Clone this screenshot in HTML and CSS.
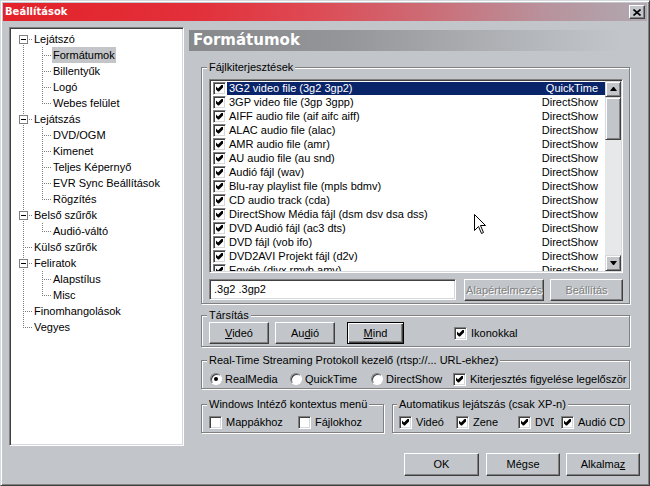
FILE: index.html
```html
<!DOCTYPE html>
<html lang="hu">
<head>
<meta charset="utf-8">
<title>Beállítások</title>
<link rel="stylesheet" href="styles.css">
</head>
<body>
<div class="window">
  <div class="titlebar">
    <span class="title">Beállítások</span>
    <span class="close"><svg width="8" height="7" viewBox="0 0 8 7"><path d="M0.5 0.5 L7.5 6.5 M7.5 0.5 L0.5 6.5" stroke="#000" stroke-width="1.6" fill="none"/></svg></span>
  </div>
  <div class="content">
    <div class="main">
      <div class="tree">
        <div class="row"><span class="g first"><span class="exp"></span></span><span class="lbl">Lejátszó</span></div>
        <div class="row"><span class="g pipe"></span><span class="g tee"></span><span class="lbl sel">Formátumok</span></div>
        <div class="row"><span class="g pipe"></span><span class="g tee"></span><span class="lbl">Billentyűk</span></div>
        <div class="row"><span class="g pipe"></span><span class="g tee"></span><span class="lbl">Logó</span></div>
        <div class="row"><span class="g pipe"></span><span class="g ell"></span><span class="lbl">Webes felület</span></div>
        <div class="row"><span class="g tee"><span class="exp"></span></span><span class="lbl">Lejátszás</span></div>
        <div class="row"><span class="g pipe"></span><span class="g tee"></span><span class="lbl">DVD/OGM</span></div>
        <div class="row"><span class="g pipe"></span><span class="g tee"></span><span class="lbl">Kimenet</span></div>
        <div class="row"><span class="g pipe"></span><span class="g tee"></span><span class="lbl">Teljes Képernyő</span></div>
        <div class="row"><span class="g pipe"></span><span class="g tee"></span><span class="lbl">EVR Sync Beállítások</span></div>
        <div class="row"><span class="g pipe"></span><span class="g ell"></span><span class="lbl">Rögzítés</span></div>
        <div class="row"><span class="g tee"><span class="exp"></span></span><span class="lbl">Belső szűrők</span></div>
        <div class="row"><span class="g pipe"></span><span class="g ell"></span><span class="lbl">Audió-váltó</span></div>
        <div class="row"><span class="g tee"></span><span class="lbl">Külső szűrők</span></div>
        <div class="row"><span class="g tee"><span class="exp"></span></span><span class="lbl">Feliratok</span></div>
        <div class="row"><span class="g pipe"></span><span class="g tee"></span><span class="lbl">Alapstílus</span></div>
        <div class="row"><span class="g pipe"></span><span class="g ell"></span><span class="lbl">Misc</span></div>
        <div class="row"><span class="g tee"></span><span class="lbl">Finomhangolások</span></div>
        <div class="row"><span class="g ell"></span><span class="lbl">Vegyes</span></div>
      </div>

      <div class="pane">
        <div class="header">Formátumok</div>

        <fieldset class="grp g-ext">
          <legend>Fájlkiterjesztések</legend>
          <div class="list">
            <div class="rows">
              <div class="item sel"><span class="cb on"></span><span class="txt"><span>3G2 video file (3g2 3gp2)</span><span>QuickTime</span></span></div>
              <div class="item"><span class="cb on"></span><span class="txt"><span>3GP video file (3gp 3gpp)</span><span>DirectShow</span></span></div>
              <div class="item"><span class="cb on"></span><span class="txt"><span>AIFF audio file (aif aifc aiff)</span><span>DirectShow</span></span></div>
              <div class="item"><span class="cb on"></span><span class="txt"><span>ALAC audio file (alac)</span><span>DirectShow</span></span></div>
              <div class="item"><span class="cb on"></span><span class="txt"><span>AMR audio file (amr)</span><span>DirectShow</span></span></div>
              <div class="item"><span class="cb on"></span><span class="txt"><span>AU audio file (au snd)</span><span>DirectShow</span></span></div>
              <div class="item"><span class="cb on"></span><span class="txt"><span>Audió fájl (wav)</span><span>DirectShow</span></span></div>
              <div class="item"><span class="cb on"></span><span class="txt"><span>Blu-ray playlist file (mpls bdmv)</span><span>DirectShow</span></span></div>
              <div class="item"><span class="cb on"></span><span class="txt"><span>CD audio track (cda)</span><span>DirectShow</span></span></div>
              <div class="item"><span class="cb on"></span><span class="txt"><span>DirectShow Média fájl (dsm dsv dsa dss)</span><span>DirectShow</span></span></div>
              <div class="item"><span class="cb on"></span><span class="txt"><span>DVD Audió fájl (ac3 dts)</span><span>DirectShow</span></span></div>
              <div class="item"><span class="cb on"></span><span class="txt"><span>DVD fájl (vob ifo)</span><span>DirectShow</span></span></div>
              <div class="item"><span class="cb on"></span><span class="txt"><span>DVD2AVI Projekt fájl (d2v)</span><span>DirectShow</span></span></div>
              <div class="item"><span class="cb on"></span><span class="txt"><span>Egyéb (divx rmvb amv)</span><span>DirectShow</span></span></div>
            </div>
            <div class="vscroll">
              <span class="sbtn"><span class="arr up"></span></span>
              <span class="thumb"></span>
              <span class="track"></span>
              <span class="sbtn"><span class="arr down"></span></span>
            </div>
          </div>
          <div class="extrow">
            <div class="input">.3g2 .3gp2</div>
            <div class="btn dis w-def">Alapértelmezés</div>
            <div class="btn dis w-set">Beállítás</div>
          </div>
        </fieldset>

        <fieldset class="grp g-assoc">
          <legend>Társítás</legend>
          <div class="assocrow">
            <div class="btn w-vid"><span><u>V</u>ideó</span></div>
            <div class="btn w-aud"><span>Au<u>d</u>ió</span></div>
            <div class="btn def w-mind"><span><u>M</u>ind</span></div>
            <label class="opt o-icons"><span class="cb on"></span><span class="otxt">Ikonokkal</span></label>
          </div>
        </fieldset>

        <fieldset class="grp g-rtsp">
          <legend>Real-Time Streaming Protokoll kezelő (rtsp://... URL-ekhez)</legend>
          <div class="optrow rtsprow">
            <label class="opt o-rm"><span class="rb on"></span><span class="rtxt">RealMedia</span></label>
            <label class="opt o-qt"><span class="rb"></span><span class="rtxt">QuickTime</span></label>
            <label class="opt o-ds"><span class="rb"></span><span class="rtxt">DirectShow</span></label>
            <label class="opt"><span class="cb on"></span><span class="otxt">Kiterjesztés figyelése legelőször</span></label>
          </div>
        </fieldset>

        <div class="grprow">
          <fieldset class="grp g-win">
            <legend>Windows Intéző kontextus menü</legend>
            <div class="optrow">
              <label class="opt o-map"><span class="cb"></span><span class="otxt">Mappákhoz</span></label>
              <label class="opt"><span class="cb"></span><span class="otxt">Fájlokhoz</span></label>
            </div>
          </fieldset>
          <fieldset class="grp g-auto">
            <legend>Automatikus lejátszás (csak XP-n)</legend>
            <div class="optrow">
              <label class="opt o-vid"><span class="cb on"></span><span class="otxt">Videó</span></label>
              <label class="opt o-zene"><span class="cb on"></span><span class="otxt">Zene</span></label>
              <label class="opt o-dvd"><span class="cb on"></span><span class="otxt">DVD</span></label>
              <label class="opt"><span class="cb on"></span><span class="otxt">Audió CD</span></label>
            </div>
          </fieldset>
        </div>
      </div>
    </div>

    <div class="footer">
      <div class="btn w-ok">OK</div>
      <div class="btn w-cancel">Mégse</div>
      <div class="btn w-apply"><span>Alkalma<u>z</u></span></div>
    </div>
  </div>

  <svg class="cursor" width="13" height="21" viewBox="0 0 13 21"><path d="M0.5 0.5 L0.5 16.5 L4.5 12.5 L7.5 19.5 L9.5 18.5 L6.5 11.5 L11.5 11.5 Z" fill="#fff" stroke="#000" stroke-width="1"/></svg>
</div>
</body>
</html>
```

FILE: styles.css
```css
* { box-sizing: border-box; }
html, body { margin: 0; padding: 0; }
body {
  width: 650px;
  height: 486px;
  overflow: hidden;
  font-family: "Liberation Sans", Arial, sans-serif;
  font-size: 11px;
  line-height: 13px;
  color: #000;
  background: #c2c6ca;
}

.window {
  position: relative;
  width: 650px;
  height: 486px;
  background: #c2c6ca;
  border: 1px solid;
  border-color: #d6d9dc #404040 #404040 #d6d9dc;
  box-shadow: inset 1px 1px 0 #fff, inset -1px -1px 0 #808080;
  padding: 2px;
  display: flex;
  flex-direction: column;
}

/* title bar */
.titlebar {
  height: 18px;
  flex: none;
  display: flex;
  align-items: center;
  padding-left: 2px;
  padding-right: 2px;
  background: linear-gradient(to right, #e4222a 0%, #e2303a 30%, #de4a54 48%, #cc6c76 66%, #b8929c 84%, #b0a8b0 100%);
}
.title {
  flex: 1;
  color: #fff;
  font-family: "DejaVu Sans", Verdana, sans-serif;
  font-weight: bold;
  font-size: 10px;
  line-height: 18px;
}
.close {
  width: 16px;
  height: 14px;
  display: flex;
  align-items: center;
  justify-content: center;
  background: #c2c6ca;
  border: 1px solid;
  border-color: #fff #404040 #404040 #fff;
  box-shadow: inset -1px -1px 0 #808080;
}

.content {
  flex: 1;
  padding: 6px 7px 0 6px;
  display: flex;
  flex-direction: column;
}
.main {
  display: flex;
  gap: 5px;
}

/* sunken field */
.tree, .list, .input {
  background: #fff;
  border: 1px solid;
  border-color: #808080 #fff #fff #808080;
  box-shadow: inset 1px 1px 0 #404040, inset -1px -1px 0 #d6d9dc;
}

/* tree */
.tree {
  width: 175px;
  height: 419px;
  flex: none;
  padding: 3px 0 0 4px;
}
.row {
  display: flex;
  height: 16px;
  line-height: 16px;
  white-space: nowrap;
}
.g {
  flex: none;
  width: 19px;
  height: 16px;
  display: flex;
  align-items: flex-start;
}
.pipe {
  background: repeating-linear-gradient(to bottom, #808080 0 1px, transparent 1px 2px) 9px 0 / 1px 16px no-repeat;
}
.tee {
  background:
    repeating-linear-gradient(to bottom, #808080 0 1px, transparent 1px 2px) 9px 0 / 1px 16px no-repeat,
    repeating-linear-gradient(to right, #808080 0 1px, transparent 1px 2px) 11px 8px / 8px 1px no-repeat;
}
.ell {
  background:
    repeating-linear-gradient(to bottom, #808080 0 1px, transparent 1px 2px) 9px 0 / 1px 9px no-repeat,
    repeating-linear-gradient(to right, #808080 0 1px, transparent 1px 2px) 11px 8px / 8px 1px no-repeat;
}
.first {
  background:
    repeating-linear-gradient(to bottom, #808080 0 1px, transparent 1px 2px) 9px 8px / 1px 8px no-repeat,
    repeating-linear-gradient(to right, #808080 0 1px, transparent 1px 2px) 11px 8px / 8px 1px no-repeat;
}
.exp {
  width: 9px;
  height: 9px;
  margin: 4px 0 0 5px;
  background: #fff;
  border: 1px solid #808080;
  display: flex;
  align-items: center;
  justify-content: center;
}
.exp::after {
  content: "";
  width: 5px;
  height: 1px;
  background: #000;
}
.lbl {
  padding: 0 1px;
  height: 16px;
}
.lbl.sel { background: #c3c5c8; }

/* right pane */
.pane {
  width: 451px;
  flex: none;
  display: flex;
  flex-direction: column;
}
.header {
  margin-top: 3px;
  height: 21px;
  background: linear-gradient(to right, #86888a 0%, #94969a 35%, #acaeb2 65%, #c2c6ca 96%);
  color: #fff;
  font-family: "DejaVu Sans", Verdana, sans-serif;
  font-weight: bold;
  font-size: 15px;
  line-height: 21px;
  padding-left: 4px;
}

/* group boxes */
.grp {
  margin: 0 10px 0 12px;
  padding: 0 6px 2px 7px;
  min-width: 0;
  border: 1px solid #808080;
  box-shadow: 1px 1px 0 #fff, inset 1px 1px 0 #fff;
}
.grp legend {
  padding: 0 2px;
  margin-left: -2px;
  line-height: 13px;
  background: #c2c6ca;
}
.g-ext { margin-top: 10px; }
.g-assoc { margin-top: 5px; padding-bottom: 2px; }
.g-rtsp { margin-top: 7px; padding-bottom: 1px; }
.grprow {
  margin: 9px 10px 0 12px;
  display: flex;
  gap: 8px;
}
.grprow .grp { margin: 0; }
.g-win { width: 183px; flex: none; }
.g-auto { flex: 1; padding-left: 6px; }

/* list */
.list {
  margin-top: 5px;
  height: 194px;
  padding: 1px;
  display: flex;
}
.rows {
  flex: 1;
  overflow: hidden;
}
.item {
  display: flex;
  align-items: center;
  height: 14px;
  padding-left: 2px;
  white-space: nowrap;
}
.txt {
  flex: 1;
  display: flex;
  justify-content: space-between;
  margin-left: 1px;
  padding: 0 7px 0 2px;
  height: 13px;
  line-height: 13px;
}
.item.sel .txt {
  background: #0a246a;
  color: #fff;
}

/* scrollbar */
.vscroll {
  width: 16px;
  flex: none;
  display: flex;
  flex-direction: column;
  background: #e6e8ea;
}
.sbtn, .thumb {
  flex: none;
  width: 16px;
  background: #c2c6ca;
  border: 1px solid;
  border-color: #d6d9dc #404040 #404040 #d6d9dc;
  box-shadow: inset 1px 1px 0 #fff, inset -1px -1px 0 #808080;
}
.sbtn {
  height: 16px;
  display: flex;
  align-items: center;
  justify-content: center;
}
.thumb { height: 43px; }
.track { flex: 1; }
.arr {
  width: 1px;
  height: 0;
  border-left: 3px solid transparent;
  border-right: 3px solid transparent;
  box-sizing: content-box;
}
.arr.up { border-bottom: 4px solid #000; }
.arr.down { border-top: 4px solid #000; }

/* checkbox & radio */
.cb {
  flex: none;
  width: 13px;
  height: 13px;
  background: #fff;
  border: 1px solid;
  border-color: #808080 #fff #fff #808080;
  box-shadow: inset 1px 1px 0 #404040, inset -1px -1px 0 #d6d9dc;
  display: inline-flex;
  align-items: center;
  justify-content: center;
}
.cb.on::after {
  content: "";
  width: 7px;
  height: 7px;
  background: #000;
  clip-path: polygon(0 2px, 2px 4px, 6px 0, 7px 0, 7px 3px, 3px 7px, 2px 7px, 0 5px);
}
.rb {
  flex: none;
  width: 12px;
  height: 12px;
  border-radius: 50%;
  background: #fff;
  border: 1px solid;
  border-color: #808080 #fff #fff #808080;
  box-shadow: inset 1px 1px 0 #404040;
  display: inline-flex;
  align-items: center;
  justify-content: center;
}
.rb.on::after {
  content: "";
  width: 4px;
  height: 4px;
  border-radius: 50%;
  background: #000;
}

/* buttons */
.btn {
  flex: none;
  height: 22px;
  display: flex;
  align-items: center;
  justify-content: center;
  background: #c2c6ca;
  border: 1px solid;
  border-color: #fff #404040 #404040 #fff;
  box-shadow: inset -1px -1px 0 #808080;
  white-space: nowrap;
}
.btn.dis {
  color: #808080;
  text-shadow: 1px 1px 0 #fff;
}
.btn.def {
  border: 1px solid #000;
  box-shadow: inset 1px 1px 0 #fff, inset -1px -1px 0 #404040, inset -2px -2px 0 #808080;
}

.extrow {
  margin-top: 6px;
  display: flex;
}
.input {
  width: 247px;
  height: 21px;
  margin-right: 8px;
  padding: 3px 0 0 4px;
}
.w-def { width: 80px; margin-right: 6px; }
.w-set { width: 73px; }

.assocrow {
  display: flex;
  align-items: center;
  height: 22px;
  padding-left: 0;
}
.w-vid { width: 60px; margin-right: 6px; }
.w-aud { width: 60px; margin-right: 12px; }
.w-mind { width: 57px; margin-right: 50px; }

.opt {
  display: flex;
  align-items: center;
  white-space: nowrap;
  flex: none;
}
.otxt { margin-left: 4px; }
.rtxt { margin-left: 3px; }

.optrow {
  display: flex;
  align-items: center;
  height: 16px;
}
.rtsprow { margin-top: 4px; padding-left: 1px; }
.g-win .optrow, .g-auto .optrow { margin-top: 3px; }
.o-rm { width: 80px; }
.o-qt { width: 81px; }
.o-ds { width: 82px; }
.o-map { width: 89px; }
.o-vid { width: 57px; }
.o-zene { width: 62px; }
.o-dvd { width: 36px; overflow: hidden; margin-right: 7px; }

/* footer */
.footer {
  margin-top: 7px;
  display: flex;
  justify-content: flex-end;
}
.footer .btn { height: 23px; }
.w-ok { width: 75px; margin-right: 7px; }
.w-cancel { width: 74px; margin-right: 6px; }
.w-apply { width: 74px; }

/* mouse pointer over the list */
.cursor {
  position: absolute;
  left: 473px;
  top: 213px;
}
```
